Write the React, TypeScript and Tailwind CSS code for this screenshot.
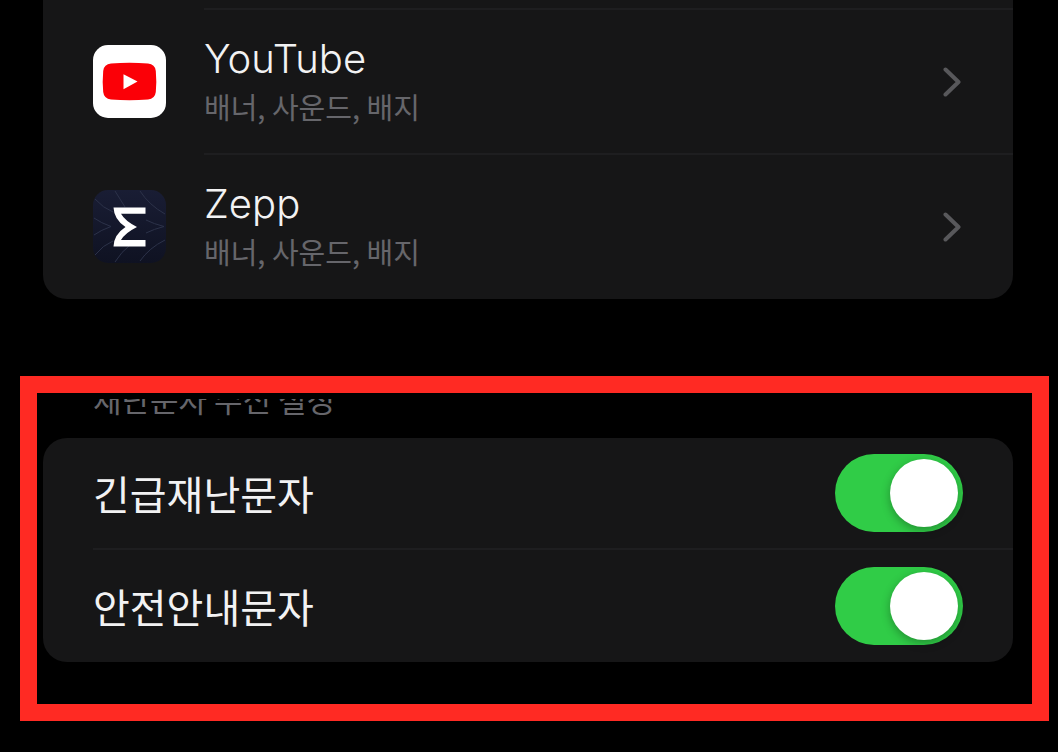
import { useState } from "react";

const YouTubeIcon = () => (
  <svg className="h-[73px] w-[73px]" viewBox="0 0 73 73" aria-hidden="true">
    <rect width="73" height="73" rx="15" fill="#fff" />
    <path
      d="M18 18.6Q36.500 17 55 18.600Q62 19.200 62.800 26Q63.800 36.500 62.800 47Q62 53.800 55 54.400Q36.500 56 18 54.400Q11 53.800 10.200 47Q9.200 36.500 10.200 26Q11 19.200 18 18.600Z"
      fill="#fb0007"
    />
    <path d="M30.500 29.200L44.500 36.600L30.500 44.200Z" fill="#fff" />
  </svg>
);

const ZeppIcon = () => (
  <svg className="h-[73px] w-[73px]" viewBox="0 0 73 73" aria-hidden="true">
    <defs>
      <linearGradient id="zepp" x1="0" y1="0" x2="0" y2="1">
        <stop offset="0" stopColor="#191d34" />
        <stop offset="1" stopColor="#0f1222" />
      </linearGradient>
    </defs>
    <rect width="73" height="73" rx="15" fill="url(#zepp)" />
    <g fill="none" stroke="#2c3249" strokeWidth="1">
      <path d="M2 9Q10 18 20 22M1 28Q8 33 18 36.500Q8 40 1 45M2 65Q10 55 20 51" />
      <path d="M22 1Q27 9 32 17M22 72Q29 61 36 56" />
      <path d="M47 1Q56 15 72 24M53 30Q61 34 71 36.500Q61 39 53 43M47 71Q56 58 72 50" />
    </g>
    <path
      d="M20.500 17.500H52.500V23.800H28Q32 31 44 37Q32 43 28 50H52.500V56.400H20.500Q21 44.500 32.500 37Q21 29.500 20.500 17.500Z"
      fill="#fff"
    />
  </svg>
);

const Chevron = () => (
  <svg
    className="h-[30px] w-[18px] shrink-0"
    viewBox="0 0 18 30"
    fill="none"
    stroke="#58585b"
    strokeWidth="4"
    strokeLinecap="round"
    strokeLinejoin="round"
    aria-hidden="true"
  >
    <path d="M2.500 2.500L15.500 15L2.500 27.500" />
  </svg>
);

const apps = [
  { name: "YouTube", detail: "배너, 사운드, 배지", icon: <YouTubeIcon /> },
  { name: "Zepp", detail: "배너, 사운드, 배지", icon: <ZeppIcon /> },
];

const alerts = ["긴급재난문자", "안전안내문자"];

const App = () => {
  const [enabled, setEnabled] = useState<boolean[]>([true, true]);

  const toggle = (index: number) =>
    setEnabled(enabled.map((on, i) => (i === index ? !on : on)));

  return (
    <main className="min-h-screen bg-black pb-[31px] font-['Noto_Sans_CJK_KR',sans-serif] text-[#f2f2f3]">
      {/* App list */}
      <section className="ml-[43px] mr-[45px] rounded-b-[24px] bg-[#161617] pt-2 pb-px">
        {apps.map((app) => (
          <button
            key={app.name}
            type="button"
            className="flex w-full items-center gap-[38px] pl-[50px] text-left"
          >
            <span className="pt-0.5">{app.icon}</span>
            <span className="flex h-[145px] grow items-center justify-between border-t-2 border-[#1e1e20] pr-[52px]">
              <span className="flex flex-col">
                <span className="font-['Inter',sans-serif] text-[40px] leading-[48px] font-light">
                  {app.name}
                </span>
                <span className="text-[29px] leading-[46px] text-[#66666b]">
                  {app.detail}
                </span>
              </span>
              <Chevron />
            </span>
          </button>
        ))}
      </section>

      {/* Emergency alerts */}
      <section className="ml-5 mr-[9px] mt-[77px] border-[17px] border-[#ff2a23] pb-[42px] pl-[6px] pr-[19px] pt-[6px]">
        <div className="flex h-5 items-end overflow-hidden pl-[50px]">
          <h2 className="text-[31px] leading-[40px] text-[#66666b]">
            재난문자 수신 설정
          </h2>
        </div>
        <div className="mt-[19px] rounded-[24px] bg-[#161617] pl-[50px]">
          {alerts.map((name, i) => (
            <label
              key={name}
              className="flex h-28 items-center justify-between border-b-2 border-[#1e1e20] pr-[50px] text-[40px] leading-[48px] last:border-b-0"
            >
              {name}
              <input
                type="checkbox"
                role="switch"
                checked={enabled[i]}
                onChange={() => toggle(i)}
                className="flex h-[78px] w-32 shrink-0 appearance-none items-center rounded-full bg-[#39393d] px-[5px] before:h-[68px] before:w-[68px] before:rounded-full before:bg-white before:shadow-[0_3px_10px_rgba(0,0,0,0.3)] before:content-[''] checked:justify-end checked:bg-[#30cc47]"
              />
            </label>
          ))}
        </div>
      </section>
    </main>
  );
};

export default App;
